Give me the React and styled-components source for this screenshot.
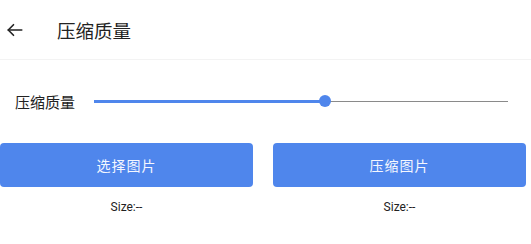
import React from "react";
import styled, { createGlobalStyle } from "styled-components";

const GlobalStyle = createGlobalStyle`
  html, body {
    margin: 0;
    padding: 0;
    background: #fff;
    font-family: Roboto, "Noto Sans CJK SC", sans-serif;
  }
`;

const Page = styled.div`
  width: 531px;
  height: 244px;
  background: #fff;
`;

const Header = styled.header`
  height: 59px;
  display: flex;
  align-items: center;
  border-bottom: 1px solid #f3f3f3;
`;

const BackButton = styled.button`
  width: 32px;
  height: 59px;
  padding: 0 0 0 6px;
  border: none;
  background: none;
  display: flex;
  align-items: center;
  color: #222;
`;

const Title = styled.h1`
  margin: 0 0 0 25px;
  font-size: 18.5px;
  font-weight: 400;
  color: #222;
`;

const SliderRow = styled.div`
  display: flex;
  align-items: center;
  padding: 0 23px 0 15px;
  height: 40px;
  margin-top: 21px;
`;

const Label = styled.span`
  font-size: 15px;
  color: #222;
  width: 79px;
  flex-shrink: 0;
`;

const Track = styled.div`
  position: relative;
  flex: 1;
  height: 12px;
  display: flex;
  align-items: center;
`;

const Rail = styled.div`
  position: absolute;
  left: 0;
  right: 0;
  height: 1px;
  background: #8a8a8a;
`;

const Fill = styled.div`
  position: absolute;
  left: 0;
  height: 3px;
  background: #4f86ec;
`;

const Thumb = styled.div`
  position: absolute;
  width: 12px;
  height: 12px;
  margin-left: -6px;
  border-radius: 50%;
  background: #4f86ec;
`;

const Buttons = styled.div`
  display: grid;
  grid-template-columns: 253px 253px;
  column-gap: 20px;
  margin-top: 22px;
`;

const Column = styled.div`
  display: flex;
  flex-direction: column;
  align-items: center;
`;

const Action = styled.button`
  width: 100%;
  height: 44px;
  border: none;
  border-radius: 4px;
  background: #4f86ec;
  color: #f4f7ff;
  font-family: inherit;
  font-size: 14px;
  letter-spacing: 1px;
`;

const SizeText = styled.div`
  margin-top: 13px;
  font-size: 12px;
  color: #222;
`;

const value = 0.557;

export default function App() {
  return (
    <Page>
      <GlobalStyle />
      <Header>
        <BackButton aria-label="back">
          <svg width="18" height="18" viewBox="0 0 24 24" fill="none" stroke="currentColor" strokeWidth="2.2" strokeLinecap="round" strokeLinejoin="round">
            <path d="M21 12H3" />
            <path d="M10 5l-7 7 7 7" />
          </svg>
        </BackButton>
        <Title>压缩质量</Title>
      </Header>
      <SliderRow>
        <Label>压缩质量</Label>
        <Track>
          <Rail />
          <Fill style={{ width: `${value * 100}%` }} />
          <Thumb style={{ left: `${value * 100}%` }} />
        </Track>
      </SliderRow>
      <Buttons>
        <Column>
          <Action>选择图片</Action>
          <SizeText>Size:--</SizeText>
        </Column>
        <Column>
          <Action>压缩图片</Action>
          <SizeText>Size:--</SizeText>
        </Column>
      </Buttons>
    </Page>
  );
}
